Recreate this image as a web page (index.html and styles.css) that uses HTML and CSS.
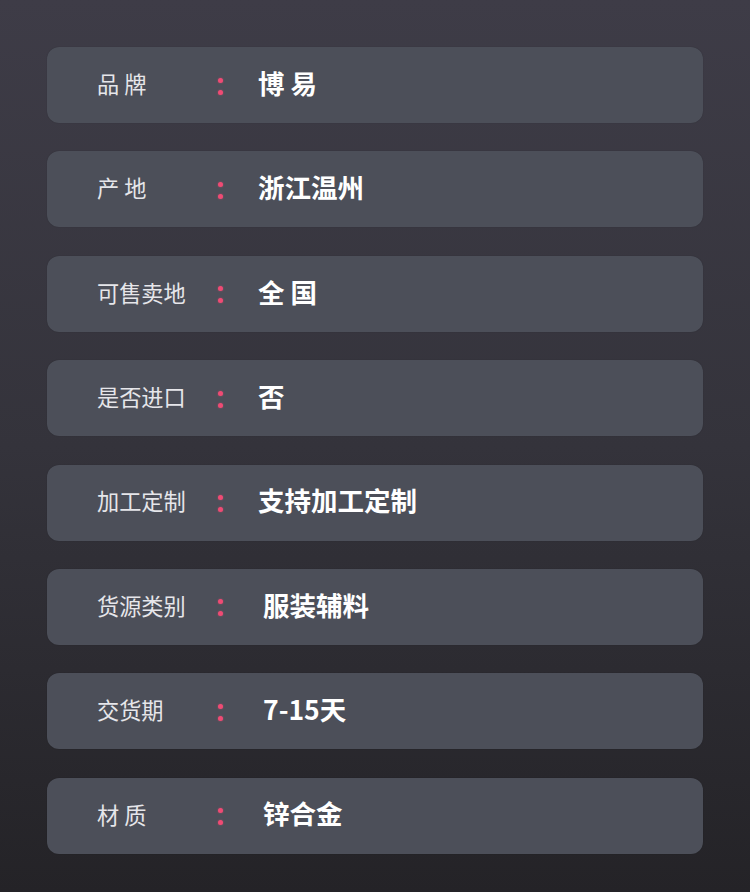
FILE: index.html
```html
<!DOCTYPE html>
<html lang="zh-CN">
<head>
<meta charset="utf-8">
<title>参数</title>
<link rel="stylesheet" href="styles.css">
</head>
<body>
<div class="list">
  <div class="card"><span class="label">品 牌</span><span class="colon"><i></i><i></i></span><span class="value">博 易</span></div>
  <div class="card"><span class="label">产 地</span><span class="colon"><i></i><i></i></span><span class="value">浙江温州</span></div>
  <div class="card"><span class="label">可售卖地</span><span class="colon"><i></i><i></i></span><span class="value">全 国</span></div>
  <div class="card"><span class="label">是否进口</span><span class="colon"><i></i><i></i></span><span class="value">否</span></div>
  <div class="card"><span class="label">加工定制</span><span class="colon"><i></i><i></i></span><span class="value">支持加工定制</span></div>
  <div class="card"><span class="label">货源类别</span><span class="colon"><i></i><i></i></span><span class="value shift">服装辅料</span></div>
  <div class="card"><span class="label">交货期</span><span class="colon"><i></i><i></i></span><span class="value shift">7-15天</span></div>
  <div class="card"><span class="label">材 质</span><span class="colon"><i></i><i></i></span><span class="value shift">锌合金</span></div>
</div>
</body>
</html>
```
FILE: styles.css
```css
html, body {
  margin: 0;
  padding: 0;
}
body {
  width: 750px;
  height: 892px;
  background: linear-gradient(to bottom, #3e3c47 0%, #34333b 50%, #242327 100%);
  font-family: "Noto Sans CJK SC", "Noto Sans", sans-serif;
  overflow: hidden;
}
.list {
  padding: 47px 47px 0 47px;
  display: flex;
  flex-direction: column;
  gap: 28.4px;
}
.card {
  height: 76px;
  box-sizing: border-box;
  background: #4c4f59;
  border-radius: 12px;
  display: flex;
  align-items: center;
  padding-left: 50px;
  padding-bottom: 4px;
  box-shadow: 0 0 1px rgba(0,0,0,0.3);
}
.label {
  width: 118px;
  font-size: 22.2px;
  color: #e6e6ea;
  line-height: 1;
  white-space: pre;
}
.colon {
  width: 10px;
  display: flex;
  flex-direction: column;
  align-items: center;
  gap: 7px;
  margin-top: 6px;
}
.colon i {
  display: block;
  width: 5px;
  height: 5px;
  border-radius: 50%;
  background: #ef4b74;
  box-shadow: 0 0 2px rgba(239,75,116,0.6);
}
.value {
  margin-left: 33px;
  font-size: 26.5px;
  font-weight: 700;
  color: #ffffff;
  line-height: 1;
  white-space: pre;
}
.value.shift {
  margin-left: 38px;
}
```
